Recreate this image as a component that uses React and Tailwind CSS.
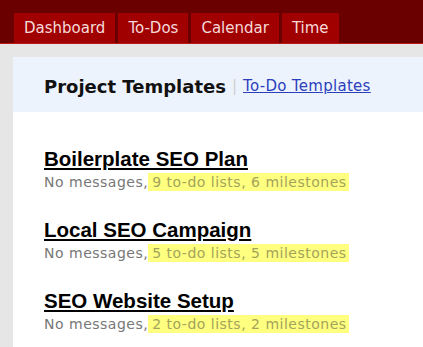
import React from 'react';

const tabs = ['Dashboard', 'To-Dos', 'Calendar', 'Time'];

const templates = [
    { name: 'Boilerplate SEO Plan', info: '9 to-do lists, 6 milestones' },
    { name: 'Local SEO Campaign', info: '5 to-do lists, 5 milestones' },
    { name: 'SEO Website Setup', info: '2 to-do lists, 2 milestones' },
];

const verdana = { fontFamily: '"DejaVu Sans", Verdana, sans-serif' };

const App = () => {
    return (
        <div className="w-[423px] h-[347px] overflow-hidden bg-[#e6e6e6]" style={verdana}>
            {/* Top nav */}
            <div className="h-[44px] bg-[#6b0000] border-b border-[#b81818] flex items-end pl-[14px] gap-[3px]">
                {tabs.map(tab => (
                    <div key={tab} className="h-[30px] px-[10px] bg-[#a00000] text-[#f6dada] text-[15px] flex items-center">
                        {tab}
                    </div>
                ))}
            </div>

            {/* Panel */}
            <div className="pt-[13px] pl-[13px]">
                <div className="bg-white h-[300px]">
                    <div className="h-[55px] bg-[#edf3fc] pl-[31px] pt-[3px] flex items-center gap-[6px]">
                        <span className="font-bold text-[18px] text-[#111]">Project Templates</span>
                        <span className="text-[#d0d0d0] text-[15px]">|</span>
                        <a href="#" className="text-[#2b3fbd] underline text-[15px] tracking-[0.3px]">To-Do Templates</a>
                    </div>

                    <div className="pl-[31px] pt-[35px] flex flex-col gap-[26px]">
                        {templates.map(t => (
                            <div key={t.name}>
                                <a href="#" className="block text-[20.5px] font-bold text-black underline leading-[24px]" style={{ fontFamily: '"Liberation Sans", Arial, sans-serif' }}>
                                    {t.name}
                                </a>
                                <div className="text-[14px] text-[#777] leading-[20px] mt-[1px] tracking-[0.5px]">
                                    No messages,<span className="bg-[#ffff80] text-[#a3a35c] pl-[4px] pr-[2px] py-[1px]">{t.info}</span>
                                </div>
                            </div>
                        ))}
                    </div>
                </div>
            </div>
        </div>
    );
};

export default App;
